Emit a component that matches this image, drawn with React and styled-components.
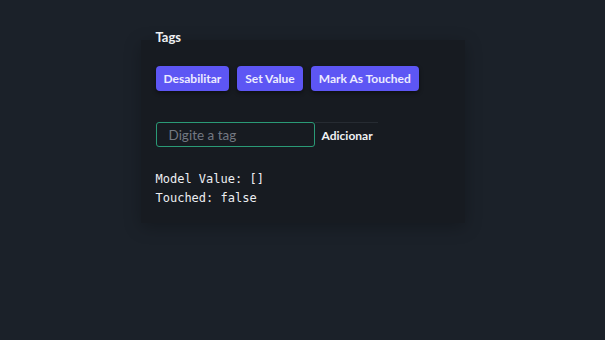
import React from "react";
import styled, { createGlobalStyle } from "styled-components";

const Global = createGlobalStyle`
  html, body { margin: 0; padding: 0; background: #1b2129; }
  body { font-family: Lato, "Noto Sans", sans-serif; }
`;

const Page = styled.div`
  min-height: 340px;
  padding-top: 40px;
  box-sizing: border-box;
`;

const Card = styled.section`
  width: 324px;
  margin: 0 auto;
  box-sizing: border-box;
  padding: 0 15px 15px;
  background: #171b21;
  box-shadow: 0 4px 16px rgba(0, 0, 0, 0.25);
  display: flex;
  flex-direction: column;
`;

const Title = styled.h2`
  margin: -12px 0 0;
  font-size: 13px;
  line-height: 18px;
  font-weight: 700;
  color: #eef0f3;
`;

const Toolbar = styled.div`
  display: flex;
  gap: 8px;
  margin-top: 20px;
`;

const ActionButton = styled.button`
  height: 25px;
  padding: 0 8px;
  border: none;
  border-radius: 4px;
  background: #5d56f4;
  color: #ecebff;
  font-family: inherit;
  font-size: 12px;
  font-weight: 700;
  box-shadow: 0 2px 4px rgba(0, 0, 0, 0.45);
  cursor: pointer;
`;

const InputRow = styled.div`
  display: flex;
  align-items: center;
  margin-top: 31px;
`;

const TagInput = styled.input`
  width: 159px;
  height: 25px;
  box-sizing: border-box;
  padding: 0 12px;
  border: 1.5px solid #2a9a76;
  border-radius: 3px;
  background: transparent;
  color: #e5e7eb;
  font-family: inherit;
  font-size: 13.5px;
  outline: none;
  &::placeholder { color: #737881; }
`;

const AddButton = styled.button`
  height: 25px;
  padding: 0 5px 0 7px;
  border: none;
  border-top: 1px solid #262b32;
  background: transparent;
  color: #f1f2f4;
  font-family: inherit;
  font-size: 12px;
  font-weight: 700;
  cursor: pointer;
`;

const Info = styled.pre`
  margin: 23px 0 0;
  font-family: "DejaVu Sans Mono", monospace;
  font-size: 12px;
  line-height: 19px;
  color: #eceef1;
`;

export default function App() {
  return (
    <>
      <Global />
      <Page>
        <Card>
          <Title>Tags</Title>
          <Toolbar>
            <ActionButton>Desabilitar</ActionButton>
            <ActionButton>Set Value</ActionButton>
            <ActionButton>Mark As Touched</ActionButton>
          </Toolbar>
          <InputRow>
            <TagInput placeholder="Digite a tag" />
            <AddButton>Adicionar</AddButton>
          </InputRow>
          <Info>{"Model Value: []\nTouched: false"}</Info>
        </Card>
      </Page>
    </>
  );
}
